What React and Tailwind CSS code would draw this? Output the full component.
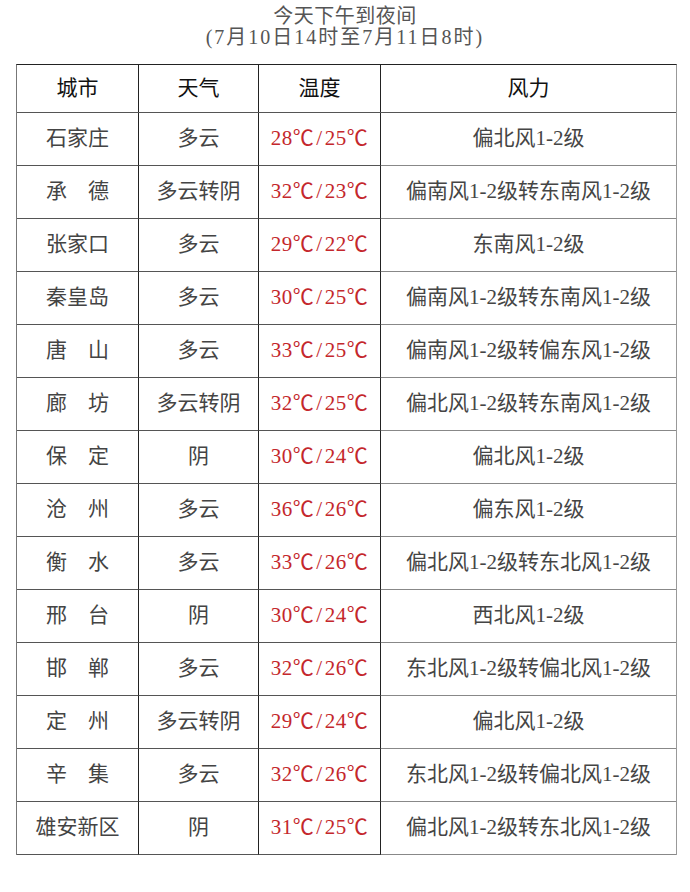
import React from "react";

const rows = [
  ["石家庄", "多云", "28", "25", "偏北风1-2级"],
  ["承　德", "多云转阴", "32", "23", "偏南风1-2级转东南风1-2级"],
  ["张家口", "多云", "29", "22", "东南风1-2级"],
  ["秦皇岛", "多云", "30", "25", "偏南风1-2级转东南风1-2级"],
  ["唐　山", "多云", "33", "25", "偏南风1-2级转偏东风1-2级"],
  ["廊　坊", "多云转阴", "32", "25", "偏北风1-2级转东南风1-2级"],
  ["保　定", "阴", "30", "24", "偏北风1-2级"],
  ["沧　州", "多云", "36", "26", "偏东风1-2级"],
  ["衡　水", "多云", "33", "26", "偏北风1-2级转东北风1-2级"],
  ["邢　台", "阴", "30", "24", "西北风1-2级"],
  ["邯　郸", "多云", "32", "26", "东北风1-2级转偏北风1-2级"],
  ["定　州", "多云转阴", "29", "24", "偏北风1-2级"],
  ["辛　集", "多云", "32", "26", "东北风1-2级转偏北风1-2级"],
  ["雄安新区", "阴", "31", "25", "偏北风1-2级转东北风1-2级"],
];

const font = {
  fontFamily: '"Liberation Serif", "Noto Sans CJK SC", serif',
};

function Temp({ hi, lo }) {
  return (
    <span className="text-[#c4272c] tracking-[0.5px]">
      {hi}℃<span className="px-[2px]">/</span>{lo}℃
    </span>
  );
}

export default function App() {
  return (
    <div className="w-[690px] h-[892px] bg-white" style={font}>
      <div className="pt-[6px] flex flex-col items-center gap-[1px] text-[20px] leading-[20px] text-[#555]">
        <div className="tracking-[0.5px]">今天下午到夜间</div>
        <div className="tracking-[2px]">(7月10日14时至7月11日8时)</div>
      </div>

      <div className="ml-[16px] mt-[17px] w-[661px] border-t border-l border-r border-t-[#222] border-l-[#777] border-r-[#999]">
        <div className="flex h-[48px] border-b border-[#555] text-[21px] text-[#111]">
          <div className="w-[122px] flex items-center justify-center border-r border-[#222]">城市</div>
          <div className="w-[120px] flex items-center justify-center border-r border-[#222]">天气</div>
          <div className="w-[122px] flex items-center justify-center border-r border-[#222]">温度</div>
          <div className="flex-1 flex items-center justify-center">风力</div>
        </div>

        {rows.map((r, i) => (
          <div key={i} className="flex h-[53px] text-[21px] text-[#444]">
            <div className="w-[122px] flex items-center justify-center border-r border-b border-r-[#222] border-b-[#555]">{r[0]}</div>
            <div className="w-[120px] flex items-center justify-center border-r border-b border-r-[#222] border-b-[#555]">{r[1]}</div>
            <div className="w-[122px] flex items-center justify-center border-r border-b border-r-[#222] border-b-[#555]">
              <Temp hi={r[2]} lo={r[3]} />
            </div>
            <div className="flex-1 flex items-center justify-center border-b border-[#888] text-[#454545]">{r[4]}</div>
          </div>
        ))}
      </div>
    </div>
  );
}
